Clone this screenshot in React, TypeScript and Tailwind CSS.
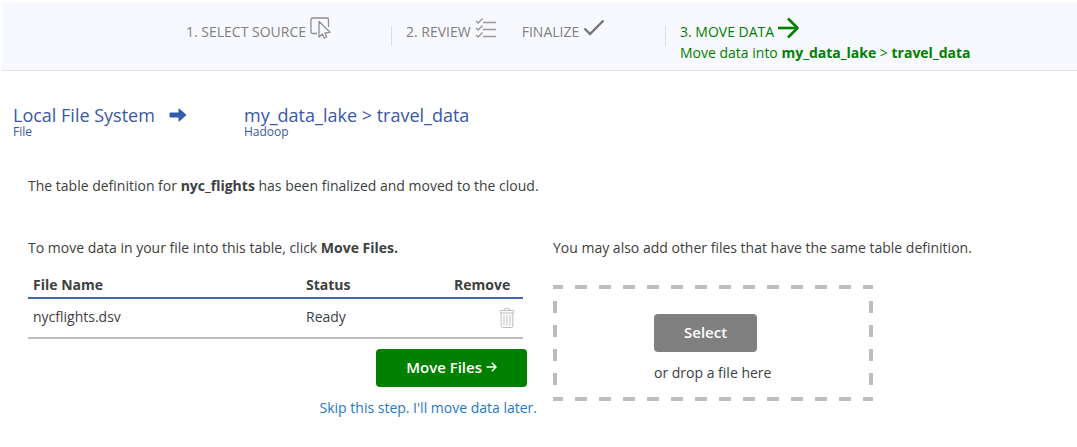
import type { ReactNode } from "react";

function SelectIcon() {
  return (
    <svg width="22" height="23" viewBox="0 0 22 23" fill="none" stroke="#8f8f8f" strokeWidth="1.3" strokeLinejoin="round" aria-hidden="true">
      <path d="M7 16.5H2.5A1.5 1.5 0 0 1 1 15V2.500A1.500 1.500 0 0 1 2.500 1H17a1.500 1.500 0 0 1 1.500 1.500V10" />
      <path d="M9 4.500V20L12.400 17L14.200 21L16.600 20L15 16L20 15.300Z" />
    </svg>
  );
}

function ChecklistIcon() {
  return (
    <svg width="22" height="22" viewBox="0 0 22 22" fill="none" stroke="#999" strokeWidth="1.4" aria-hidden="true">
      <path d="M8 5.500H21M8 12.500H21M8 19.500H21" />
      <path d="M1 4L3.200 6L7.500 1.500M1 11L3.200 13L7.500 8.500M1 18L3.200 20L7.500 15.500" />
    </svg>
  );
}

function CheckIcon() {
  return (
    <svg width="22" height="18" viewBox="0 0 22 18" fill="none" stroke="#757575" strokeWidth="2.4" aria-hidden="true">
      <path d="M1.500 9.500L7 15L20.500 1.500" />
    </svg>
  );
}

function ArrowIcon() {
  return (
    <svg width="22" height="22" viewBox="0 0 22 22" fill="none" stroke="green" strokeWidth="2.6" aria-hidden="true">
      <path d="M0 11H19" />
      <path d="M10 1.500L19.500 11L10 20.500" strokeLinejoin="round" />
    </svg>
  );
}

function SmallArrowIcon() {
  return (
    <svg width="11" height="10" viewBox="0 0 11 10" fill="none" stroke="currentColor" strokeWidth="1.4" aria-hidden="true">
      <path d="M.5 5H10M5.800 .8L10 5L5.800 9.200" />
    </svg>
  );
}

function SolidArrowIcon() {
  return (
    <svg width="18" height="14" viewBox="0 0 18 14" fill="#335cac" aria-hidden="true">
      <path d="M1.500 4.500H9.500V1.200Q9.500 0 10.500 .7L17 6.400Q17.600 7 17 7.600L10.500 13.300Q9.500 14 9.500 12.800V9.500H1.500Q.5 9.500 .5 8.500V5.500Q.5 4.500 1.500 4.500Z" />
    </svg>
  );
}

function TrashIcon() {
  return (
    <svg width="16" height="20" viewBox="0 0 16 20" fill="none" stroke="#bdbdbd" strokeWidth="1" aria-hidden="true">
      <path d="M5.500 2.500V1.500Q5.500 .5 6.500 .5H9.500Q10.500 .5 10.500 1.500V2.500" />
      <rect x="1" y="2.500" width="14" height="2.500" rx="1" />
      <path d="M2.200 5V18Q2.200 19.500 3.700 19.500H12.300Q13.800 19.500 13.800 18V5M5 7V17.500M8 7V17.500M11 7V17.500" />
    </svg>
  );
}

function Step({ label, icon }: { label: string; icon: ReactNode }) {
  return (
    <div className="flex h-5 items-center gap-1 whitespace-nowrap">
      <span>{label}</span>
      <span className="pb-2">{icon}</span>
    </div>
  );
}

export default function App() {
  return (
    <div className="min-h-screen bg-white font-['Open_Sans','Noto_Sans',sans-serif] text-sm leading-5 text-[#404040]">
      <header className="ml-0.5 border-t-2 border-b border-t-white border-b-[#e6e0e4] bg-[#f8f9ff]">
        <ol className="flex items-start pt-5 pb-[7px] pl-46 text-[#808080]">
          <li className="w-[205px] shrink-0">
            <Step label="1. SELECT SOURCE" icon={<SelectIcon />} />
          </li>
          <li className="flex w-[274px] shrink-0 items-start gap-3.5">
            <span className="mt-1 h-5 w-px bg-[#dcdde2]" />
            <div className="flex gap-[25px]">
              <Step label="2. REVIEW" icon={<ChecklistIcon />} />
              <Step label="FINALIZE" icon={<CheckIcon />} />
            </div>
          </li>
          <li className="flex items-start gap-3.5 text-[#008000]" aria-current="step">
            <span className="mt-1 h-5 w-px bg-[#dcdde2]" />
            <div>
              <Step label="3. MOVE DATA" icon={<ArrowIcon />} />
              <p className="mt-px whitespace-nowrap">
                Move data into <b>my_data_lake</b> &gt; <b>travel_data</b>
              </p>
            </div>
          </li>
        </ol>
      </header>

      <section className="flex px-[13px] pt-[34px] text-[#3b57a6]">
        <div className="w-[231px] shrink-0">
          <h2 className="flex items-center gap-3.5 text-lg leading-5">
            Local File System <SolidArrowIcon />
          </h2>
          <p className="text-xs leading-3.5">File</p>
        </div>
        <div>
          <h2 className="text-lg leading-5">my_data_lake &gt; travel_data</h2>
          <p className="text-xs leading-3.5">Hadoop</p>
        </div>
      </section>

      <main className="px-7 pt-[37px]">
        <p>
          The table definition for <b>nyc_flights</b> has been finalized and moved to the cloud.
        </p>
        <div className="flex items-start gap-4 pt-[42px]">
          <section className="w-[509px] shrink-0">
            <p>
              To move data in your file into this table, click <b>Move Files.</b>
            </p>
            <table className="mt-[13px] w-[495px] table-fixed border-collapse text-left">
              <thead>
                <tr className="border-b-2 border-[#4267b2]">
                  <th className="w-[273px] px-[5px] pt-1 pb-0.5 font-bold">File Name</th>
                  <th className="w-[148px] px-[5px] pt-1 pb-0.5 font-bold">Status</th>
                  <th className="px-[5px] pt-1 pb-0.5 font-bold">Remove</th>
                </tr>
              </thead>
              <tbody>
                <tr className="h-10 border-b-2 border-[#bdbdbd]">
                  <td className="px-[5px] pb-0.5">nycflights.dsv</td>
                  <td className="px-[5px] pb-0.5">Ready</td>
                  <td className="pr-2">
                    <button type="button" aria-label="Remove nycflights.dsv" className="ml-auto block">
                      <TrashIcon />
                    </button>
                  </td>
                </tr>
              </tbody>
            </table>
            <div className="flex flex-col items-end pt-2.5">
              <button type="button" className="mr-2.5 flex h-9.5 items-center gap-1 rounded-sm bg-[#008000] px-7.5 pb-0.5 text-[15px] font-semibold text-white">
                Move Files <SmallArrowIcon />
              </button>
              <a href="#later" className="mt-[11px] text-[#1f78c8]">
                Skip this step. I'll move data later.
              </a>
            </div>
          </section>
          <section className="min-w-0 flex-1">
            <p>You may also add other files that have the same table definition.</p>
            <div className="mt-[27px] h-29 max-w-80 bg-[linear-gradient(90deg,#bdbbbb_50%,transparent_50%),linear-gradient(90deg,#bdbbbb_50%,transparent_50%),linear-gradient(#bdbbbb_50%,transparent_50%),linear-gradient(#bdbbbb_50%,transparent_50%)] bg-[length:24px_4px,24px_4px,4px_24px,4px_24px] bg-[position:-2px_0,-2px_100%,0_-8px,100%_-8px] [background-repeat:repeat-x,repeat-x,repeat-y,repeat-y]">
              <div className="pt-[29px] pl-[101px]">
                <button type="button" className="block h-9.5 rounded-sm bg-[#808080] px-7.5 pb-0.5 text-[15px] font-semibold text-white">
                  Select
                </button>
                <p className="mt-[11px]">or drop a file here</p>
              </div>
            </div>
          </section>
        </div>
      </main>
    </div>
  );
}
